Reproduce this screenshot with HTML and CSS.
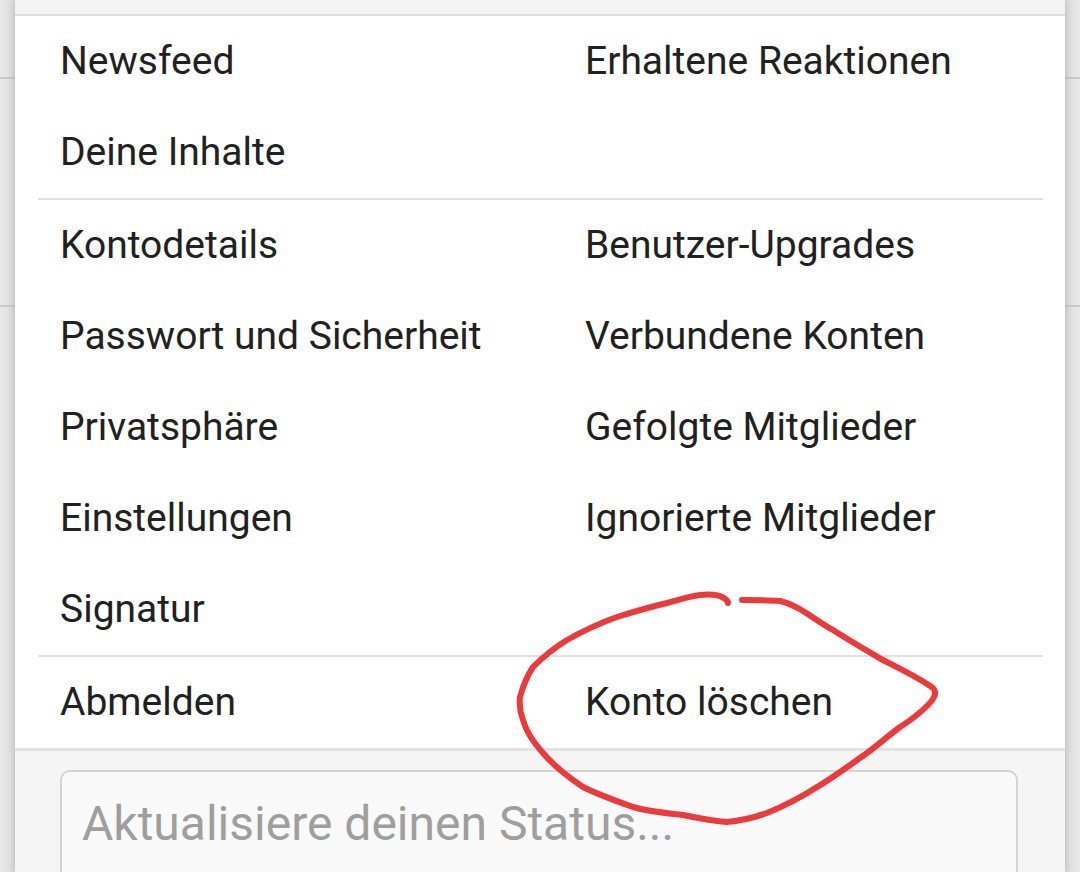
FILE: index.html
```html
<!DOCTYPE html>
<html lang="de">
<head>
<meta charset="utf-8">
<title>Konto-Menü</title>
<link rel="stylesheet" href="styles.css">
</head>
<body>
  <div class="backdrop">
    <div class="bd-header"></div>
    <div class="bd-band"></div>
  </div>

  <nav class="menu">
    <div class="menu-top"></div>
    <ul class="menu-group">
      <li>Newsfeed</li>
      <li>Erhaltene Reaktionen</li>
      <li>Deine Inhalte</li>
    </ul>
    <ul class="menu-group">
      <li>Kontodetails</li>
      <li>Benutzer-Upgrades</li>
      <li>Passwort und Sicherheit</li>
      <li>Verbundene Konten</li>
      <li>Privatsphäre</li>
      <li>Gefolgte Mitglieder</li>
      <li>Einstellungen</li>
      <li>Ignorierte Mitglieder</li>
      <li>Signatur</li>
    </ul>
    <ul class="menu-group last">
      <li>Abmelden</li>
      <li>Konto löschen</li>
    </ul>
    <div class="menu-foot">
      <div class="status-input"><span class="placeholder">Aktualisiere deinen Status...</span></div>
    </div>
  </nav>

  <svg class="annotation" width="1080" height="872" viewBox="0 0 1080 872" aria-hidden="true">
    <path d="M742 600 C755 600 768 600 780 601 C798 605 815 620 833 630 C850 641 866 650 883 660 C900 669 918 677 933 688 C938 693 934 699 928 705 C918 715 908 722 900 727 C888 736 878 745 867 753 C850 765 834 777 817 787 C800 798 784 806 767 813 C753 818 740 821 727 822 C712 821 698 818 683 815 C666 813 650 812 633 807 C616 801 599 795 583 787 C568 777 554 766 543 753 C533 742 526 731 523 720 C520 712 519 705 520 697 C523 686 527 676 533 667 C543 657 554 648 567 640 C583 631 600 623 617 617 C633 612 650 607 667 603 C678 600 690 596 700 595 C710 594 718 595 722 597 C726 599 728 601 728 603"
      fill="none" stroke="#e93a3c" stroke-width="6" stroke-linecap="round" stroke-linejoin="round"/>
  </svg>
</body>
</html>
```

FILE: styles.css
```css
* {
  box-sizing: border-box;
}

html, body {
  margin: 0;
  padding: 0;
}

body {
  width: 1080px;
  height: 872px;
  overflow: hidden;
  position: relative;
  background: linear-gradient(90deg, #e9e9e9 0px, #dcdcdc 15px, #dcdcdc 1065px, #e9e9e9 1080px);
  font-family: Roboto, "Noto Sans", "Liberation Sans", sans-serif;
}

.backdrop {
  display: flex;
  flex-direction: column;
}

.bd-header {
  height: 79px;
  border-bottom: 2px solid #c9c9c9;
}

.bd-band {
  height: 228px;
  border-bottom: 2px solid #c9c9c9;
}

.menu {
  position: absolute;
  left: 15px;
  top: 0;
  width: 1050px;
  height: 872px;
  background: #ffffff;
  box-shadow: 0 0 8px rgba(0, 0, 0, 0.18);
  display: flex;
  flex-direction: column;
}

.menu > * {
  flex-shrink: 0;
}

.menu-top {
  height: 16px;
  background: #f3f3f3;
  border-bottom: 2px solid #dedede;
}

.menu-group {
  list-style: none;
  margin: 0 22px 0 23px;
  padding: 0 0 0 22px;
  display: grid;
  grid-template-columns: 525px 1fr;
  border-bottom: 2px solid #e0e0e0;
}

.menu-group.last {
  margin: 0;
  padding-left: 45px;
  border-bottom: 3px solid #e2e2e2;
}

.menu-group li {
  height: 91px;
  line-height: 91px;
  font-size: 39px;
  color: #212121;
  white-space: nowrap;
}

.menu-foot {
  flex: 1 0 auto;
  background: #f5f5f5;
  padding: 19px 47px 0 45px;
}

.status-input {
  height: 140px;
  border: 2px solid #d3d3d3;
  border-radius: 10px;
  background: #f9f9f9;
  padding: 24px 20px 0 20px;
}

.placeholder {
  font-size: 48px;
  line-height: 55px;
  color: #9e9e9e;
  white-space: nowrap;
}

.annotation {
  position: absolute;
  left: 0;
  top: 0;
  pointer-events: none;
}
```
